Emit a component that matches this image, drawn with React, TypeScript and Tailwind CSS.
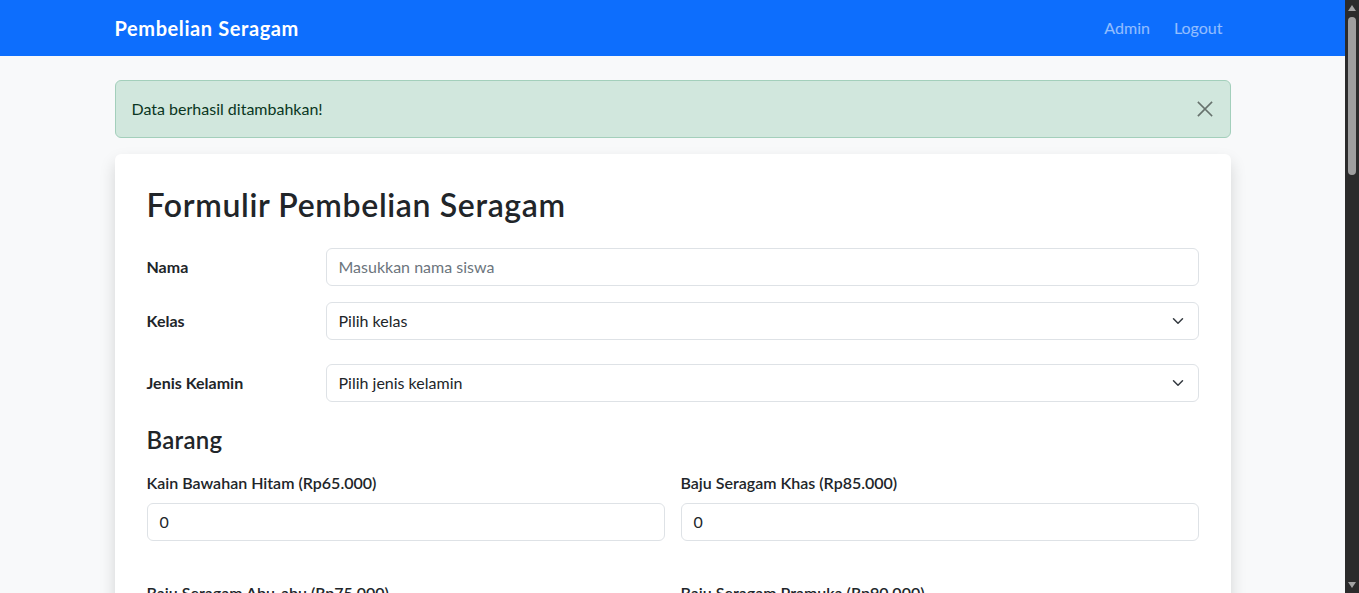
import React from "react";

const items = [
  "Kain Bawahan Hitam (Rp65.000)",
  "Baju Seragam Khas (Rp85.000)",
  "Baju Seragam Abu-abu (Rp75.000)",
  "Baju Seragam Pramuka (Rp90.000)",
  "Baju Olahraga (Rp70.000)",
  "Jas Almamater (Rp120.000)",
];

function Chevron() {
  return (
    <svg
      className="pointer-events-none absolute right-3 top-1/2 -translate-y-1/2"
      width="16"
      height="12"
      viewBox="0 0 16 16"
      fill="none"
      stroke="#343a40"
      strokeWidth="2"
      strokeLinecap="round"
      strokeLinejoin="round"
    >
      <path d="m2 5 6 6 6-6" />
    </svg>
  );
}

function SelectBox({ text }: { text: string }) {
  return (
    <div className="relative h-[38px] flex-1 rounded-md border border-[#dee2e6] bg-white pl-3 pr-9 leading-[36px] text-[#212529]">
      {text}
      <Chevron />
    </div>
  );
}

// fake browser scrollbar, the reference was taken with one showing
function Scrollbar() {
  return (
    <div className="fixed right-0 top-0 flex h-screen w-[14px] flex-col items-center bg-[#2b2b2b]">
      <svg width="10" height="8" viewBox="0 0 10 8" className="mt-[4px]">
        <path d="M5 1 9 7H1z" fill="#a3a3a3" />
      </svg>
      <div className="mt-[5px] h-[158px] w-[8px] rounded-full bg-[#9f9f9f]" />
      <div className="flex-1" />
      <svg width="10" height="8" viewBox="0 0 10 8" className="mb-[4px]">
        <path d="M1 1h8L5 7z" fill="#a3a3a3" />
      </svg>
    </div>
  );
}

export default function App() {
  return (
    <div
      className="min-h-screen w-[calc(100%-14px)] bg-[#f8f9fa] text-base text-[#212529]"
      style={{ fontFamily: 'Lato, "Noto Sans", sans-serif' }}
    >
      <nav className="h-14 bg-[#0d6efd]">
        <div className="mx-auto flex h-full max-w-[1140px] items-center justify-between px-3">
          <span className="text-xl font-bold tracking-[0.03em] text-white">Pembelian Seragam</span>
          <div className="flex gap-2">
            <span className="px-2 text-white/55">Admin</span>
            <span className="px-2 text-white/55">Logout</span>
          </div>
        </div>
      </nav>

      <div className="mx-auto max-w-[1140px] px-3 pb-12">
        <div className="relative mb-4 mt-6 rounded-md border border-[#a3cfbb] bg-[#d1e7dd] py-4 pl-4 pr-12 leading-6 text-[#0a3622]">
          Data berhasil ditambahkan!
          <button className="absolute right-[17px] top-1/2 -translate-y-1/2 opacity-50">
            <svg width="16" height="16" viewBox="0 0 16 16" stroke="#000" strokeWidth="1.7" strokeLinecap="square" className="block">
              <path d="M1.5 1.5l13 13M14.5 1.5l-13 13" />
            </svg>
          </button>
        </div>

        <div className="rounded-md bg-white p-8 shadow-[0_0.5rem_1rem_rgba(0,0,0,0.15)]">
          <h2 className="mb-6 text-[32px] font-semibold leading-[1.2] tracking-[0.02em]">Formulir Pembelian Seragam</h2>

          <div className="mb-4 flex items-center">
            <label className="w-[179px] font-bold">Nama</label>
            <div className="h-[38px] flex-1 rounded-md border border-[#dee2e6] bg-white px-3 leading-[36px] text-[#6c757d]">
              Masukkan nama siswa
            </div>
          </div>

          <div className="mb-6 flex items-center">
            <label className="w-[179px] font-bold">Kelas</label>
            <SelectBox text="Pilih kelas" />
          </div>

          <div className="mb-6 flex items-center">
            <label className="w-[179px] font-bold">Jenis Kelamin</label>
            <SelectBox text="Pilih jenis kelamin" />
          </div>

          <h4 className="mb-4 text-2xl font-semibold leading-[1.2] tracking-[0.01em]">Barang</h4>

          <div className="grid grid-cols-2 gap-x-4 gap-y-10">
            {items.map((it) => (
              <div key={it}>
                <label className="mb-2 block font-semibold leading-6">{it}</label>
                <div className="h-[38px] rounded-md border border-[#dee2e6] bg-white px-3 leading-[36px]">0</div>
              </div>
            ))}
          </div>

          <button className="mt-8 rounded-md bg-[#0d6efd] px-3 py-1.5 text-white">Simpan</button>
        </div>
      </div>
      <Scrollbar />
    </div>
  );
}
